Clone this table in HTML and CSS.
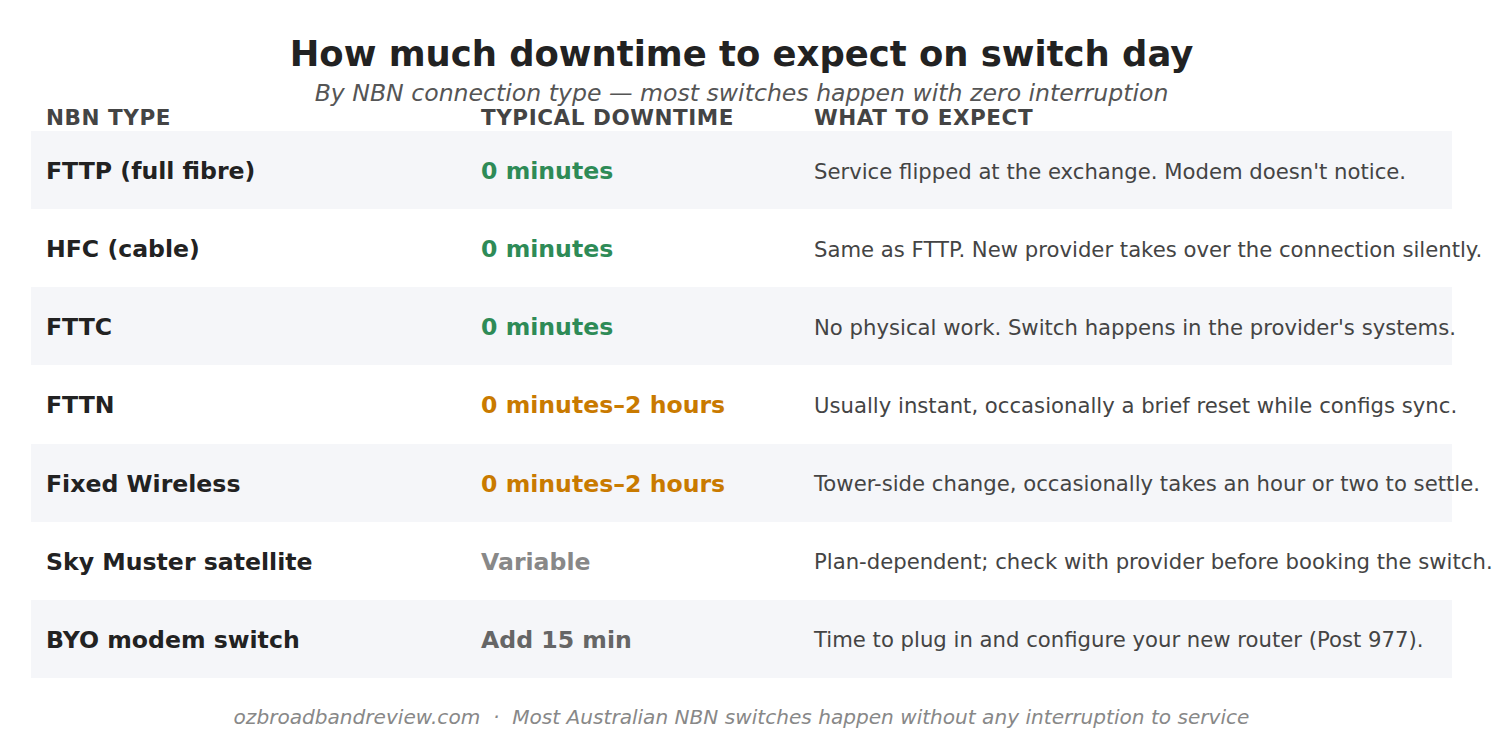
FILE: index.html
```html
<!DOCTYPE html>
<html>
<head>
<meta charset="utf-8">
<link rel="stylesheet" href="styles.css">
</head>
<body>
<div class="page">
  <h1 class="title">How much downtime to expect on switch day</h1>
  <p class="subtitle">By NBN connection type — most switches happen with zero interruption</p>
  <div class="table">
    <div class="row head">
      <div>NBN TYPE</div><div>TYPICAL DOWNTIME</div><div>WHAT TO EXPECT</div>
    </div>
    <div class="row shade">
      <div class="type">FTTP (full fibre)</div><div class="dt green">0 minutes</div><div class="desc">Service flipped at the exchange. Modem doesn't notice.</div>
    </div>
    <div class="row">
      <div class="type">HFC (cable)</div><div class="dt green">0 minutes</div><div class="desc">Same as FTTP. New provider takes over the connection silently.</div>
    </div>
    <div class="row shade">
      <div class="type">FTTC</div><div class="dt green">0 minutes</div><div class="desc">No physical work. Switch happens in the provider's systems.</div>
    </div>
    <div class="row">
      <div class="type">FTTN</div><div class="dt orange">0 minutes–2 hours</div><div class="desc">Usually instant, occasionally a brief reset while configs sync.</div>
    </div>
    <div class="row shade">
      <div class="type">Fixed Wireless</div><div class="dt orange">0 minutes–2 hours</div><div class="desc">Tower-side change, occasionally takes an hour or two to settle.</div>
    </div>
    <div class="row">
      <div class="type">Sky Muster satellite</div><div class="dt grey">Variable</div><div class="desc">Plan-dependent; check with provider before booking the switch.</div>
    </div>
    <div class="row shade">
      <div class="type">BYO modem switch</div><div class="dt dark">Add 15 min</div><div class="desc">Time to plug in and configure your new router (Post 977).</div>
    </div>
  </div>
  <p class="footer">ozbroadbandreview.com &nbsp;·&nbsp; Most Australian NBN switches happen without any interruption to service</p>
</div>
</body>
</html>
```

FILE: styles.css
```css
html, body {
  margin: 0;
  padding: 0;
  background: #ffffff;
}
body {
  font-family: "DejaVu Sans", "Liberation Sans", sans-serif;
  width: 1508px;
  height: 753px;
  overflow: hidden;
}
.page {
  width: 1421px;
  margin-left: 31px;
  padding-top: 33px;
}
.title {
  margin: 0;
  text-align: center;
  font-size: 35.4px;
  line-height: 42px;
  font-weight: bold;
  color: #222222;
  white-space: nowrap;
}
.subtitle {
  margin: 0;
  text-align: center;
  font-size: 23.6px;
  line-height: 36px;
  font-style: italic;
  color: #555555;
  white-space: nowrap;
}
.table {
  display: flex;
  flex-direction: column;
}
.row {
  display: grid;
  grid-template-columns: 435px 333px 1fr;
  padding-left: 15px;
  padding-top: 2px;
  box-sizing: border-box;
  height: 78.14px;
  align-items: center;
  white-space: nowrap;
}
.row.head {
  height: 20px;
  padding-top: 0;
  line-height: 13px;
  align-items: start;
  font-size: 21.5px;
  font-weight: bold;
  color: #444444;
  letter-spacing: 0.55px;
}
.row.shade {
  background: #f5f6f9;
}
.type {
  font-size: 23.6px;
  font-weight: bold;
  color: #222222;
}
.dt {
  font-size: 23.6px;
  font-weight: bold;
}
.green { color: #2e8b57; }
.orange { color: #c97a00; }
.grey { color: #888888; }
.dark { color: #666666; }
.desc {
  font-size: 21.2px;
  color: #444444;
  overflow: visible;
}
.footer {
  margin: 27px 0 0;
  text-align: center;
  font-size: 20.1px;
  line-height: 24px;
  font-style: italic;
  color: #888888;
  white-space: nowrap;
}
```
